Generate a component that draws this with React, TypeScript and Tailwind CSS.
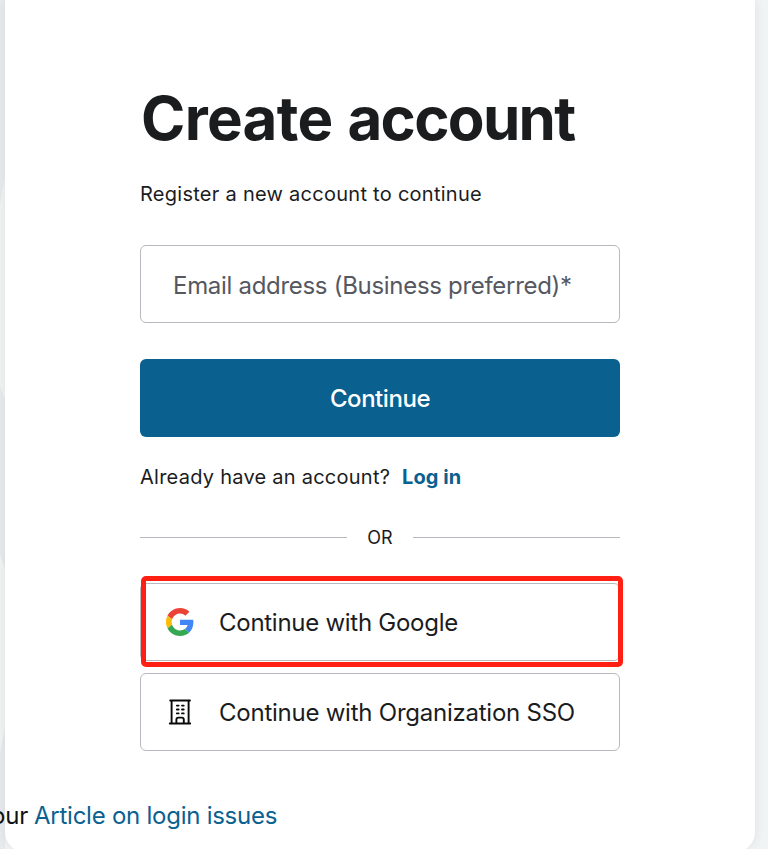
import React from "react";

function GoogleLogo() {
  return (
    <svg viewBox="0 0 48 48" className="h-7 w-7 shrink-0">
      <path fill="#EA4335" d="M24 9.5c3.54 0 6.71 1.22 9.21 3.6l6.85-6.85C35.9 2.38 30.47 0 24 0 14.62 0 6.51 5.38 2.56 13.22l7.98 6.19C12.43 13.72 17.74 9.5 24 9.5z" />
      <path fill="#4285F4" d="M46.98 24.55c0-1.57-.15-3.09-.38-4.55H24v9.02h12.94c-.58 2.96-2.26 5.48-4.78 7.18l7.73 6c4.51-4.18 7.09-10.36 7.09-17.65z" />
      <path fill="#FBBC05" d="M10.53 28.59c-.48-1.45-.76-2.99-.76-4.59s.27-3.14.76-4.59l-7.98-6.19C.92 16.46 0 20.12 0 24c0 3.88.92 7.54 2.56 10.78l7.97-6.19z" />
      <path fill="#34A853" d="M24 48c6.48 0 11.93-2.13 15.89-5.81l-7.73-6c-2.15 1.45-4.92 2.3-8.16 2.3-6.26 0-11.57-4.22-13.47-9.91l-7.98 6.19C6.51 42.62 14.62 48 24 48z" />
    </svg>
  );
}

function BuildingIcon() {
  return (
    <svg viewBox="0 0 24 28" fill="none" stroke="#08090a" strokeWidth="1.9" strokeLinecap="round" strokeLinejoin="round" className="h-7 w-6 shrink-0">
      <path d="M2.2 2.5h19.8M1.8 25.5h20.4M3.6 2.5v23M20.6 2.5v23M8.4 25.5v-3.8c0-1.3.7-2.1 2-2.1h3.4c1.3 0 2 .8 2 2.1v3.8" />
      <path strokeWidth="1.9" d="M8.9 7.6h1.7M14 7.6h1.7M8.9 11.5h1.7M14 11.5h1.7M8.9 15.4h1.7M14 15.4h1.7" />
    </svg>
  );
}

export default function App() {
  return (
    <div className="relative h-[849px] w-[768px] overflow-hidden bg-[#f1f4f4] pl-[5px] font-['Inter','Liberation_Sans',sans-serif] text-[#1b1c1e]">
      <svg className="absolute left-0 top-0 h-[849px] w-[5px]" viewBox="0 0 5 849">
        <path fill="#e8eaed" d="M0 0h5v849H0z" />
        <path fill="#f1f4f3" d="M0 205L5 175V400L0 386zM0 555L5 568V728L0 752z" />
      </svg>
      <main className="relative flex h-[852px] w-[750px] flex-col rounded-b-[20px] bg-white px-[135px] pt-[82px] shadow-[0_0_12px_rgba(0,0,0,0.08)]">
        <h1 className="h-[72px] whitespace-nowrap pl-px text-[60px] font-bold leading-[72px] tracking-[-0.7px]">
          Create <span className="ml-[1.5px] tracking-[-1.7px]">account</span>
        </h1>
        <p className="mt-[26px] h-7 whitespace-nowrap text-[20px] leading-7 tracking-[0.27px]">Register a new account to continue</p>
        <div className="mt-[37px] flex h-[78px] w-[480px] shrink-0 items-center rounded-[6px] border border-[#b8b9be] px-8 pt-1 text-[24px] text-[#555860]">
          <span className="whitespace-nowrap tracking-[-0.3px]">Email address (Business preferred)*</span>
        </div>
        <button className="mt-9 flex h-[78px] w-[480px] shrink-0 items-center justify-center rounded-[6px] bg-[#0a6190] pt-0.5 text-[24px] font-medium tracking-[-0.45px] text-white">
          Continue
        </button>
        <p className="mt-[26px] flex h-7 whitespace-nowrap text-[20px] leading-7">
          <span className="w-[262px] tracking-[0.25px]">Already have an account?</span>
          <a className="font-bold tracking-[0.1px] text-[#0a6190]">Log in</a>
        </p>
        <div className="mt-[34px] flex h-6 w-[480px] items-center text-[18px]">
          <span className="h-px w-[207px] bg-[#b8b9be]" />
          <span className="flex-1 text-center">OR</span>
          <span className="h-px w-[207px] bg-[#b8b9be]" />
        </div>
        <div className="relative mt-[34px] flex h-[78px] w-[480px] shrink-0 items-center rounded-[6px] border border-[#b8b9be] pl-[25px] text-[24px]">
          <GoogleLogo />
          <span className="ml-[25px] whitespace-nowrap pt-0.5 tracking-[-0.27px]">Continue with Google</span>
          <span className="absolute -top-[8.5px] left-[-0.5px] h-[91px] w-[482px] rounded-[5px] border-[5px] border-[#ff2013]" />
        </div>
        <div className="mt-3 flex h-[78px] w-[480px] shrink-0 items-center rounded-[6px] border border-[#b8b9be] pl-[27px] text-[24px]">
          <BuildingIcon />
          <span className="ml-[27px] whitespace-nowrap pt-0.5 tracking-[-0.24px]">Continue with Organization SSO</span>
        </div>
        <p className="-ml-[149px] mt-[49px] flex h-8 whitespace-nowrap text-[24px] leading-8">
          <span className="w-[43px] tracking-[-0.2px] text-[#101112]">our</span>
          <a className="tracking-[-0.25px] text-[#0a6190]">Article on login issues</a>
        </p>
      </main>
    </div>
  );
}
